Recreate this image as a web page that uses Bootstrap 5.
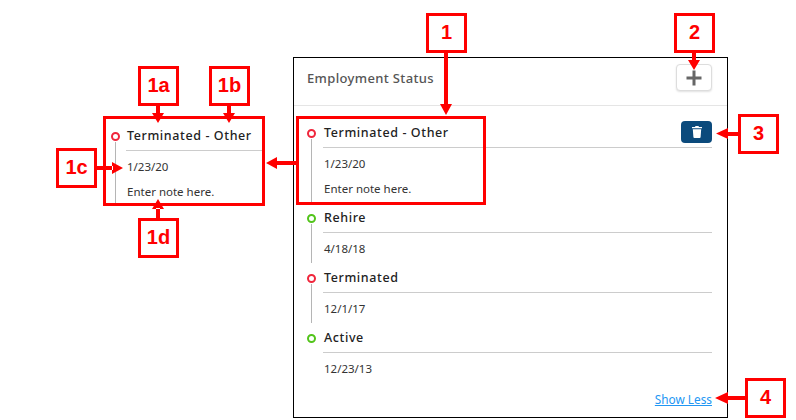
<!DOCTYPE html>
<html lang="en">
<head>
<meta charset="utf-8">
<title>Employment Status</title>
<link rel="stylesheet" href="https://cdn.jsdelivr.net/npm/bootstrap@5.3.0/dist/css/bootstrap.min.css">
<style>
html,body{margin:0;background:#fff;}
.stage{position:relative;width:796px;height:420px;overflow:hidden;font-family:"Noto Sans","Open Sans",sans-serif;font-size:12px;color:#333;}
.panel{position:absolute;left:293px;top:57px;width:435px;height:361px;border:1px solid #000;background:#fff;}
.panel-head{height:48px;padding:6px 15px 0 13px;border-bottom:1px solid #e5e5e5;}
.panel-title{font-size:13px;font-weight:500;color:#555;letter-spacing:.35px;margin:0;line-height:28px;}
.add-btn{width:36px;height:27px;padding:0;border:1px solid #ddd;border-radius:4px;background:#fff;box-shadow:0 1px 2px rgba(0,0,0,.12);line-height:0;}
.panel-body{padding:12px 15px 0 13px;}
.tl-item{display:flex;height:60px;}
.tl-item.tall{height:85px;}
.tl-rail{width:16px;flex:none;display:flex;flex-direction:column;align-items:center;padding-top:11px;margin-left:-4px;margin-right:4px;}
.tl-dot{width:9px;height:9px;border-radius:50%;border:2px solid #f0263c;flex:none;background:#fff;}
.tl-dot.go{border-color:#52c41a;}
.tl-line{width:1px;flex:1;background:#b5b5b5;margin-top:1px;}
.tl-main{flex:1;min-width:0;}
.tl-head{height:30px;border-bottom:1px solid #ccc;display:flex;align-items:center;justify-content:space-between;}
.tl-name{font-size:12.5px;font-weight:500;color:#222;letter-spacing:.6px;padding-left:1px;padding-top:2px;}
.tl-line-text{height:25px;line-height:25px;padding-left:1px;font-size:11.5px;color:#333;}
.tl-date{margin-top:3px;}
.del-btn{width:31px;height:22px;padding:0;border:0;border-radius:4px;background:#0b4a7c;line-height:0;margin-top:-2px;}
.more-link{position:absolute;right:15px;bottom:8px;font-size:11.800px;color:#2196f3;text-decoration:underline;}
.cropped{position:absolute;left:103px;top:116px;width:162px;height:90px;border:3px solid #f00;background:#fff;overflow:hidden;padding:2px 0 0 5px;}
.cropped .tl-item.tall{height:100px;}
.cropped .tl-rail{margin-right:3px;}
.hilite{position:absolute;left:296px;top:116px;width:190px;height:89px;border:3px solid #f00;}
.tag{position:absolute;width:41px;height:40px;border:3px solid #f00;background:#fff;color:#f00;font:700 20px/32px "Liberation Sans",Arial,sans-serif;text-align:center;}
.arrows{position:absolute;left:0;top:0;}
</style>
</head>
<body>
<div class="stage">
  <section class="panel">
    <header class="panel-head d-flex justify-content-between align-items-start">
      <h2 class="panel-title">Employment Status</h2>
      <button class="btn add-btn" type="button" aria-label="Add">
        <svg width="18" height="18" viewBox="0 0 18 18"><path d="M9 1.500v15M1.500 9h15" stroke="#666" stroke-width="3" fill="none"/></svg>
      </button>
    </header>
    <div class="panel-body">
      <div class="tl-item tall">
        <div class="tl-rail"><span class="tl-dot"></span><span class="tl-line"></span></div>
        <div class="tl-main">
          <div class="tl-head"><span class="tl-name">Terminated - Other</span>
            <button class="btn del-btn" type="button" aria-label="Delete">
              <svg width="10" height="12" viewBox="0 0 10 12"><path fill="#fff" d="M3.500 0h3l.5 1H10v1.300H0V1h3zM.8 3.200h8.400L8.600 11a1 1 0 0 1-1 1H2.400a1 1 0 0 1-1-1z"/></svg>
            </button>
          </div>
          <div class="tl-line-text tl-date">1/23/20</div>
          <div class="tl-line-text">Enter note here.</div>
        </div>
      </div>
      <div class="tl-item">
        <div class="tl-rail"><span class="tl-dot go"></span><span class="tl-line"></span></div>
        <div class="tl-main"><div class="tl-head"><span class="tl-name">Rehire</span></div><div class="tl-line-text tl-date">4/18/18</div></div>
      </div>
      <div class="tl-item">
        <div class="tl-rail"><span class="tl-dot"></span><span class="tl-line"></span></div>
        <div class="tl-main"><div class="tl-head"><span class="tl-name">Terminated</span></div><div class="tl-line-text tl-date">12/1/17</div></div>
      </div>
      <div class="tl-item">
        <div class="tl-rail"><span class="tl-dot go"></span></div>
        <div class="tl-main"><div class="tl-head"><span class="tl-name">Active</span></div><div class="tl-line-text tl-date">12/23/13</div></div>
      </div>
    </div>
    <a class="more-link" href="#">Show Less</a>
  </section>

  <div class="cropped">
    <div class="tl-item tall">
      <div class="tl-rail"><span class="tl-dot"></span><span class="tl-line"></span></div>
      <div class="tl-main">
        <div class="tl-head"><span class="tl-name">Terminated - Other</span></div>
        <div class="tl-line-text tl-date">1/23/20</div>
        <div class="tl-line-text">Enter note here.</div>
      </div>
    </div>
  </div>
  <div class="hilite"></div>

  <svg class="arrows" width="796" height="420" viewBox="0 0 796 420" fill="#f00" stroke="none">
    <path d="M444 53h4v52h-4z M440 104h12l-6 11z"/>
    <path d="M156 105h4v9h-4z M152 113h12l-6 10z"/>
    <path d="M227 105h4v9h-4z M223 113h12l-6 10z"/>
    <path d="M97 166h16v4H97z M112 162v12l11-6z"/>
    <path d="M156 208h4v10h-4z M152 209h12l-6-10z"/>
    <path d="M276 161h20v4h-20z M277 157v12l-11-6z"/>
    <path d="M692 53h4v8h-4z M688 60h12l-6 10z"/>
    <path d="M727 132h11v4h-11z M728 128v11l-12-5.500z"/>
    <path d="M727 396h18v4h-18z M728 392v12l-13-6z"/>
  </svg>

  <div class="tag" style="left:426px;top:13px">1</div>
  <div class="tag" style="left:138px;top:66px">1a</div>
  <div class="tag" style="left:209px;top:66px">1b</div>
  <div class="tag" style="left:56px;top:148px">1c</div>
  <div class="tag" style="left:138px;top:218px">1d</div>
  <div class="tag" style="left:674px;top:13px">2</div>
  <div class="tag" style="left:738px;top:114px">3</div>
  <div class="tag" style="left:745px;top:378px">4</div>
</div>
<script src="https://cdn.jsdelivr.net/npm/bootstrap@5.3.0/dist/js/bootstrap.bundle.min.js"></script>
</body>
</html>
